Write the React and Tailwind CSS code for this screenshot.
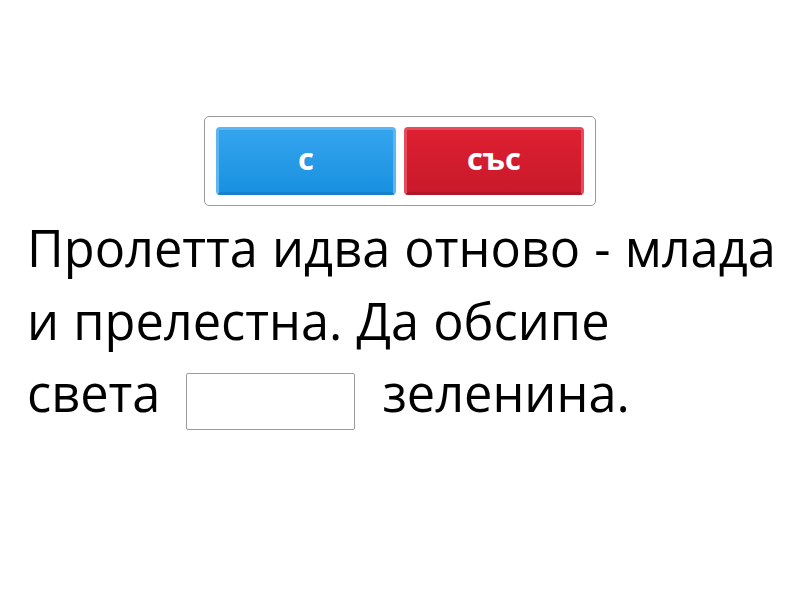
export default function App() {
  return (
    <div className="w-[800px] h-[600px] bg-white font-['Open_Sans',sans-serif] text-black">
      <div className="flex justify-center pt-[116px]">
        <div className="flex gap-[8px] border border-[#9a9a9a] rounded-[5px] px-[11px] py-[10px] bg-white">
          <button className="w-[180px] h-[68px] rounded-[4px] border-[3px] border-[#5bb6f1] border-b-[#1880cc] bg-gradient-to-b from-[#34a4ee] to-[#1791e0] text-white font-bold text-[31px] leading-none pb-[6px]">
            с
          </button>
          <button className="w-[180px] h-[68px] rounded-[4px] border-[3px] border-[#e54b5a] border-b-[#b31526] bg-gradient-to-b from-[#dd1f31] to-[#c91a2b] text-white font-bold text-[31px] leading-none pb-[6px]">
            със
          </button>
        </div>
      </div>
      <div className="pl-[27px] mt-[6px] text-[50.5px] leading-[72.5px] [word-spacing:1px]">
        <div>Пролетта идва отново - млада</div>
        <div>и прелестна. Да обсипе</div>
        <div className="flex items-start">
          <span>света</span>
          <span className="inline-block w-[169px] h-[57px] mt-[16px] ml-[26px] mr-[27px] border border-[#9a9a9a] rounded-[2px] bg-white"></span>
          <span>зеленина.</span>
        </div>
      </div>
    </div>
  );
}
